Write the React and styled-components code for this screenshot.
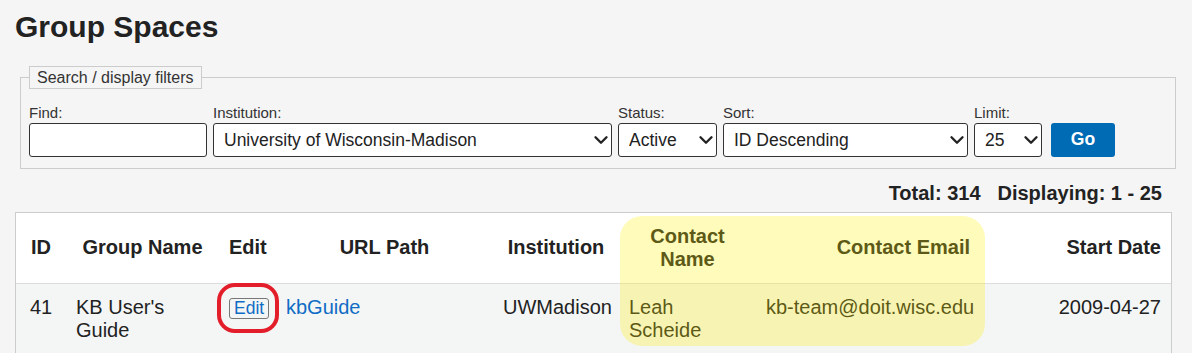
import React from 'react';
import styled, { createGlobalStyle } from 'styled-components';
import { ChevronDown } from 'lucide-react';

const GlobalStyle = createGlobalStyle`
  html, body {
    margin: 0;
    background: #f5f5f5;
  }
  body {
    font-family: "Liberation Sans", Arial, sans-serif;
    color: #222;
  }
`;

const Page = styled.div`
  padding: 0 20px 0 15px;
  height: 353px;
  overflow: hidden;
`;

const Title = styled.h1`
  margin: 10px 0 21px;
  font-size: 30px;
  line-height: 34.5px;
  font-weight: bold;
  color: #222;
`;

const Filters = styled.fieldset`
  margin: 0 -4px 0 5px;
  padding: 15px 8px 11px;
  border: 1px solid #ccc;
  min-width: 0;
`;

const Legend = styled.legend`
  padding: 0 7px;
  border: 1px solid #ccc;
  font-size: 16px;
  line-height: 21px;
  color: #333;
`;

const FieldRow = styled.div`
  display: flex;
  align-items: flex-end;
  gap: 6px;
`;

const Field = styled.label`
  display: flex;
  flex-direction: column;
`;

const FieldLabel = styled.span`
  font-size: 15px;
  line-height: 17px;
  color: #333;
  margin-bottom: 2px;
`;

const TextInput = styled.input`
  box-sizing: border-box;
  width: ${p => p.$w}px;
  height: 34px;
  border: 1px solid #333;
  border-radius: 3px;
  background: #fff;
  margin: 0;
`;

const SelectWrap = styled.div`
  position: relative;
  width: ${p => p.$w}px;
  svg {
    position: absolute;
    right: 0;
    top: 6px;
    pointer-events: none;
    color: #222;
  }
`;

const Select = styled.select`
  box-sizing: border-box;
  appearance: none;
  width: 100%;
  height: 34px;
  margin: 0;
  padding: 0 24px 0 10px;
  border: 1px solid #333;
  border-radius: 3px;
  background: #fff;
  font-family: inherit;
  font-size: 17.5px;
  color: #222;
`;

const GoButton = styled.button`
  box-sizing: border-box;
  width: 64px;
  height: 34px;
  margin-left: 3px;
  border: none;
  border-radius: 3px;
  background: #006bb5;
  color: #fff;
  font-family: inherit;
  font-size: 17.5px;
  font-weight: bold;
`;

const Totals = styled.div`
  margin: 13px 0 7px;
  padding-right: 10px;
  text-align: right;
  font-size: 20px;
  line-height: 23px;
  font-weight: bold;
  span + span {
    margin-left: 17px;
  }
`;

const TableWrap = styled.div`
  position: relative;
`;

const Table = styled.table`
  width: 100%;
  table-layout: fixed;
  border-collapse: separate;
  border-spacing: 0;
  border: 1px solid #ccc;
  border-bottom: none;
  font-size: 20px;
`;

const Th = styled.th`
  padding: 12px 10px;
  line-height: 23px;
  background: #fff;
  border-bottom: 1px solid #ddd;
  vertical-align: middle;
  text-align: ${p => p.$align || 'center'};
  font-weight: bold;
  color: #222;
`;

const Td = styled.td`
  padding: 12px 10px;
  line-height: 23px;
  background: #f4f6f6;
  vertical-align: top;
  text-align: ${p => p.$align || 'left'};
  white-space: ${p => (p.$nowrap ? 'nowrap' : 'normal')};
  color: #222;
`;

const Link = styled.a`
  color: #106cc4;
  text-decoration: none;
`;

const EditButton = styled.button`
  padding: 0 4px;
  border: 1px solid #777;
  border-radius: 3px;
  background: transparent;
  color: #106cc4;
  font-family: inherit;
  font-size: 17.5px;
  line-height: 19px;
`;

const Highlight = styled.div`
  position: absolute;
  left: 605px;
  top: 4px;
  width: 365px;
  height: 130px;
  border-radius: 22px;
  background: rgba(255, 240, 0, 0.27);
  pointer-events: none;
`;

const Ring = styled.div`
  position: absolute;
  left: 202px;
  top: 71px;
  width: 62px;
  height: 50px;
  box-sizing: border-box;
  border: 4.5px solid #e31e2a;
  border-radius: 18px;
  pointer-events: none;
`;

const columns = [
  { label: 'ID', width: 50 },
  { label: 'Group Name', width: 153 },
  { label: 'Edit', width: 57 },
  { label: 'URL Path', width: 217 },
  { label: 'Institution', width: 126 },
  { label: 'Contact Name', width: 137 },
  { label: 'Contact Email', width: 224, align: 'right' },
  { label: 'Start Date', width: 191, align: 'right' },
];

const group = {
  id: 41,
  name: "KB User's Guide",
  path: 'kbGuide',
  institution: 'UWMadison',
  contact: 'Leah Scheide',
  email: 'kb-team@doit.wisc.edu',
  start: '2009-04-27',
};

const Dropdown = ({ width, value, options }) => (
  <SelectWrap $w={width}>
    <Select defaultValue={value}>
      {options.map(o => <option key={o}>{o}</option>)}
    </Select>
    <ChevronDown size={22} strokeWidth={2.6} />
  </SelectWrap>
);

export default function App() {
  return (
    <Page>
      <GlobalStyle />
      <Title>Group Spaces</Title>
      <Filters>
        <Legend>Search / display filters</Legend>
        <FieldRow>
          <Field>
            <FieldLabel>Find:</FieldLabel>
            <TextInput $w={178} type="text" />
          </Field>
          <Field>
            <FieldLabel>Institution:</FieldLabel>
            <Dropdown width={399} value="University of Wisconsin-Madison" options={['University of Wisconsin-Madison']} />
          </Field>
          <Field>
            <FieldLabel>Status:</FieldLabel>
            <Dropdown width={99} value="Active" options={['Active', 'Inactive']} />
          </Field>
          <Field>
            <FieldLabel>Sort:</FieldLabel>
            <Dropdown width={245} value="ID Descending" options={['ID Descending', 'ID Ascending']} />
          </Field>
          <Field>
            <FieldLabel>Limit:</FieldLabel>
            <Dropdown width={68} value="25" options={['25', '50', '100']} />
          </Field>
          <GoButton>Go</GoButton>
        </FieldRow>
      </Filters>
      <Totals>
        <span>Total: 314</span>
        <span>Displaying: 1 - 25</span>
      </Totals>
      <TableWrap>
        <Table>
          <colgroup>
            {columns.map(c => <col key={c.label} style={{ width: c.width }} />)}
          </colgroup>
          <thead>
            <tr>
              {columns.map(c => <Th key={c.label} $align={c.align}>{c.label}</Th>)}
            </tr>
          </thead>
          <tbody>
            <tr>
              <Td $align="center">{group.id}</Td>
              <Td>{group.name}</Td>
              <Td $align="center"><EditButton>Edit</EditButton></Td>
              <Td><Link href="#">{group.path}</Link></Td>
              <Td $align="center">{group.institution}</Td>
              <Td>{group.contact}</Td>
              <Td $align="right" $nowrap>{group.email}</Td>
              <Td $align="right">{group.start}</Td>
            </tr>
          </tbody>
        </Table>
        <Highlight />
        <Ring />
      </TableWrap>
    </Page>
  );
}
